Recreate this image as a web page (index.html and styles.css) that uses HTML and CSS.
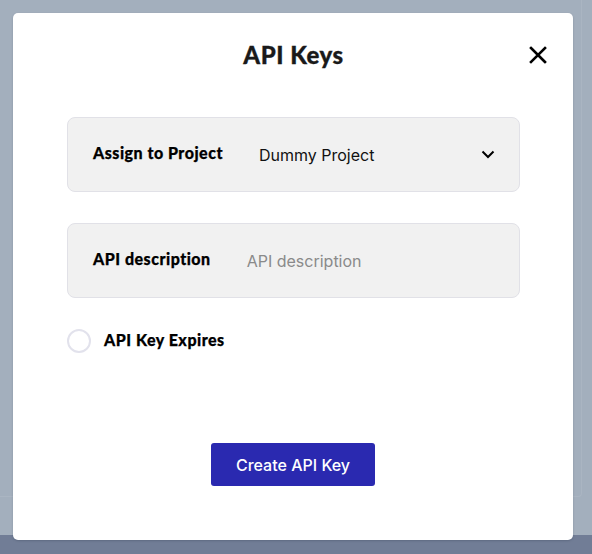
FILE: index.html
```html
<!DOCTYPE html>
<html lang="en">
<head>
<meta charset="utf-8">
<title>API Keys</title>
<link rel="stylesheet" href="styles.css">
</head>
<body>
<div class="page">
  <div class="page-content"><div class="page-card"></div></div>
  <div class="page-footer"></div>
</div>
<div class="modal" role="dialog" aria-labelledby="modal-title">
  <header class="modal-header">
    <h1 id="modal-title" class="modal-title">API Keys</h1>
    <button class="close-btn" aria-label="Close">
      <svg width="18" height="18" viewBox="0 0 18 18"><path d="M2 2L16 16M16 2L2 16" stroke="#000" stroke-width="2.6" stroke-linecap="square" fill="none"/></svg>
    </button>
  </header>
  <div class="modal-body">
    <div class="field">
      <span class="field-label">Assign to Project</span>
      <span class="field-value">Dummy Project</span>
      <svg class="chevron" width="14" height="9" viewBox="0 0 14 9"><path d="M1.5 1.5L7 7L12.5 1.5" stroke="#000" stroke-width="2" fill="none"/></svg>
    </div>
    <div class="field">
      <span class="field-label">API description</span>
      <span class="field-placeholder">API description</span>
    </div>
    <label class="radio-row">
      <span class="radio"></span>
      <span class="radio-label">API Key Expires</span>
    </label>
    <div class="actions">
      <button class="primary-btn">Create API Key</button>
    </div>
  </div>
</div>
</body>
</html>
```
FILE: styles.css
```css
html, body {
  margin: 0;
  padding: 0;
  width: 592px;
  height: 554px;
  overflow: hidden;
}
body {
  font-family: Inter, "Liberation Sans", sans-serif;
  background: #a3afbd;
}
.page {
  display: flex;
  flex-direction: column;
  height: 554px;
}
.page-content {
  flex: 1;
  position: relative;
  background: #a3afbd;
}
.page-card {
  position: absolute;
  left: 0;
  top: -10px;
  width: 582px;
  height: 507px;
  border-right: 1px solid #aab5c2;
  border-bottom: 1px solid #aab5c2;
  border-radius: 0 0 4px 0;
  box-sizing: border-box;
}
.page-footer {
  height: 19px;
  background: #717d96;
}
.modal {
  position: absolute;
  left: 13px;
  top: 13px;
  width: 560px;
  height: 527px;
  box-sizing: border-box;
  background: #fff;
  border-radius: 5px;
  box-shadow: 0 1px 2px rgba(40, 50, 70, 0.25);
  padding: 20px 53px 0 54px;
}
.modal-header {
  display: flex;
  justify-content: center;
  align-items: center;
  height: 44px;
  position: relative;
}
.modal-title {
  margin: 0;
  font-family: Lato, "Liberation Sans", sans-serif;
  font-weight: 900;
  font-size: 24px;
  letter-spacing: 0.5px;
  -webkit-text-stroke: 0.3px #1a1a1a;
  color: #1a1a1a;
  line-height: 44px;
}
.close-btn {
  position: absolute;
  right: -27px;
  top: 13px;
  background: none;
  border: 0;
  padding: 0;
  width: 18px;
  height: 18px;
  display: flex;
}
.modal-body {
  margin-top: 40px;
  display: flex;
  flex-direction: column;
}
.field {
  height: 75px;
  box-sizing: border-box;
  background: #f1f1f1;
  border: 1px solid #e1e1e7;
  border-radius: 8px;
  display: flex;
  align-items: center;
  padding: 0 24px 0 25px;
  gap: 36px;
  margin-bottom: 31px;
}
.field-label {
  font-family: Lato, "Liberation Sans", sans-serif;
  font-weight: 900;
  font-size: 16px;
  letter-spacing: 0.5px;
  -webkit-text-stroke: 0.25px #000;
  color: #000;
  margin-top: -4px;
}
.field-value {
  font-size: 16px;
  color: #111;
  flex: 1;
}
.field-placeholder {
  font-size: 16px;
  color: #8a8a8a;
  flex: 1;
}
.chevron {
  display: block;
}
.radio-row {
  display: flex;
  align-items: center;
  gap: 13px;
  height: 24px;
}
.radio {
  width: 24px;
  height: 24px;
  box-sizing: border-box;
  border: 2px solid #e2e2ec;
  border-radius: 50%;
  background: #fff;
}
.radio-label {
  font-family: Lato, "Liberation Sans", sans-serif;
  font-weight: 900;
  font-size: 16px;
  letter-spacing: 0.5px;
  -webkit-text-stroke: 0.25px #000;
  color: #000;
  margin-top: -3px;
}
.actions {
  display: flex;
  justify-content: center;
  margin-top: 90px;
  padding-right: 1px;
}
.primary-btn {
  width: 164px;
  height: 43px;
  background: #2a29b0;
  color: #fff;
  border: 0;
  border-radius: 3px;
  font-family: Inter, "Liberation Sans", sans-serif;
  font-weight: 500;
  font-size: 16px;
}
```
